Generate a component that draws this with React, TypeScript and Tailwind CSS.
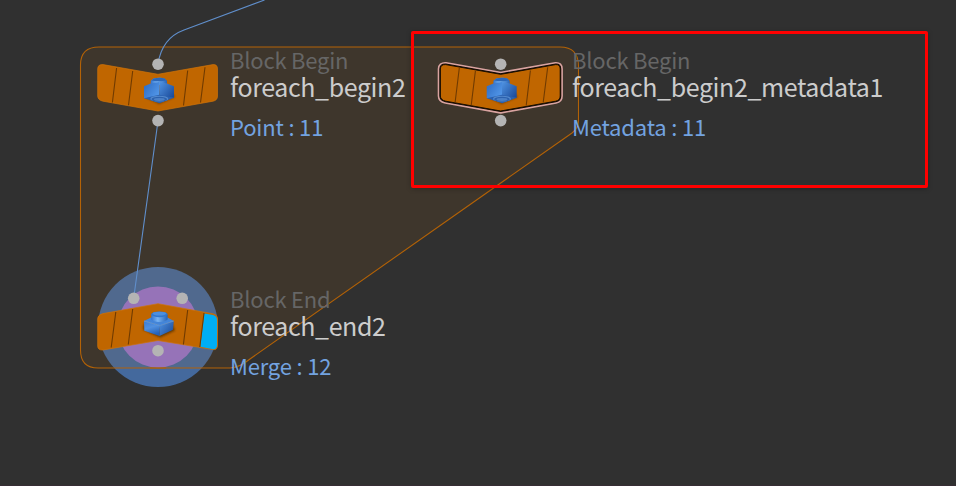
import React from "react";

type LabelProps = { type: string; name: string; info: string; place: string };

function NodeLabel({ type, name, info, place }: LabelProps) {
  return (
    <div
      className={`absolute flex flex-col whitespace-nowrap font-['Noto_Sans_CJK_SC',sans-serif] font-normal ${place}`}
    >
      <span className="h-6 text-[22px] leading-6 tracking-[-0.21px] text-[#666666]">{type}</span>
      <span className="h-[30px] text-[25px] leading-[30px] tracking-[-0.4px] text-[#cccccc]">{name}</span>
      <span className="mt-[13px] h-6 text-[22px] leading-6 tracking-[-0.16px] text-[#73a3e0]">{info}</span>
    </div>
  );
}

function Brick({ x, y, end = false }: { x: number; y: number; end?: boolean }) {
  return end ? (
    <g transform={`translate(${x} ${y})`}>
      <path d="M-15 6L2 14L17 7L14 0H-14Z" fill="#2a1a00" opacity="0.6" filter="url(#soft)" />
      <path d="M-14 -2.5L-7 -6H9.5L15.8 -2.5L2 2Z" fill="#4385d9" />
      <path d="M-14 -2.5L2 2L1.5 12.6L-13.7 7.2Z" fill="url(#endLeft)" />
      <path d="M2 2L15.8 -2.5L15 6.2L1.5 12.6Z" fill="url(#right)" />
      <path d="M-14 -2.5L2 2L15.8 -2.5" fill="none" stroke="#6ba4e6" strokeWidth="0.6" />
      <path d="M-6.8 -9.3V-4C-5 -0.8 7 -0.8 9.6 -4V-9.3Z" fill="url(#stud)" />
      <ellipse cx="1.4" cy="-9.2" rx="8.2" ry="2.9" fill="#3277cd" />
      <ellipse cx="1.4" cy="-9.9" rx="6.8" ry="1.9" fill="#4c8fdf" />
    </g>
  ) : (
    <g transform={`translate(${x} ${y})`}>
      <path d="M-13 6L1 13L17 6L12 0H-10Z" fill="#2a1a00" opacity="0.45" filter="url(#soft)" />
      <path d="M-7.3 -6V-10.2L-4.5 -12.6C-1 -13.6 4 -13.6 6.5 -12.6L9 -10.2V-6Z" fill="url(#stud)" />
      <path d="M-6.5 -10.5L-4.5 -12.6C-1 -13.6 4 -13.6 6.5 -12.6L8.2 -10.5C4 -9.5 -3 -9.5 -6.5 -10.5Z" fill="#2d67b7" />
      <path d="M-14 -4.8L-7.3 -7.4L1.3 -9V6L-14 7.3Z" fill="url(#face)" />
      <path d="M1.3 -9L9 -7.4L16 -4.8V7L1.3 6Z" fill="url(#right)" />
      <path d="M-14 7.2L1.3 3.8L16 6.8L1.5 12.2Z" fill="#2960b0" />
      <ellipse cx="1.3" cy="7.7" rx="9" ry="3" fill="#5389cd" />
      <ellipse cx="1.3" cy="8.2" rx="7.8" ry="2.4" fill="#2c61ae" />
      <ellipse cx="1.3" cy="8.5" rx="5.5" ry="1.4" fill="#4b80c6" />
    </g>
  );
}

const BEGIN_BODY =
  "M103 64.6L158 74.3L213 64.6Q217.5 64.3 217.5 69V96Q217.5 100.3 213 101.2L158 111L103 101.2Q97.7 100 97.7 96V69Q97.7 64.3 103 64.6Z";

function BeginNode({ dx = 0, selected = false }: { dx?: number; selected?: boolean }) {
  return (
    <g transform={`translate(${dx} 0)`}>
      {selected && (
        <>
          <path d={BEGIN_BODY} fill="none" stroke="#d9a3a0" strokeWidth="5.4" strokeLinejoin="round" />
          <path d={BEGIN_BODY} fill="none" stroke="#100a04" strokeWidth="2.2" />
        </>
      )}
      <path
        d={BEGIN_BODY}
        fill="#c06600"
        stroke={selected ? "#180d02" : "#cf7209"}
        strokeWidth={selected ? "1" : "0.7"}
      />
      <path
        d="M116.6 68L112.4 102.5M132.7 71L128.5 105.3M187.7 70.5L183.5 105.5M205 67.3L200.5 102.5"
        stroke="#703b00"
        strokeWidth="1.1"
      />
      <Brick x={158} y={91} />
      <g fill="#b4b4b4">
        <circle cx="158" cy="64.2" r="5.8" />
        <circle cx="158" cy="120.6" r="5.8" />
      </g>
    </g>
  );
}

export default function App() {
  const region =
    "M99 47H560Q578.5 47 578.5 66V121Q578.5 128 572 133L250 359Q239 368 230 368H98Q80.5 368 80.5 350V65Q80.5 47 99 47Z";
  return (
    <main className="relative h-[486px] w-[956px] overflow-hidden bg-[#303030]">
      <svg className="absolute inset-0" width="956" height="486" viewBox="0 0 956 486" fill="none">
        <defs>
          <filter id="soft" x="-30%" y="-50%" width="160%" height="200%">
            <feGaussianBlur stdDeviation="1.2" />
          </filter>
          <linearGradient id="endLeft" x1="0" y1="0" x2="0.3" y2="1">
            <stop stopColor="#3a7cd3" />
            <stop offset="0.5" stopColor="#5090df" />
            <stop offset="1" stopColor="#2461b8" />
          </linearGradient>
          <linearGradient id="face" x1="0" y1="0" x2="1" y2="0.7">
            <stop stopColor="#2d6ac2" />
            <stop offset="1" stopColor="#5196e8" />
          </linearGradient>
          <linearGradient id="right" x1="0" y1="0" x2="1" y2="0.8">
            <stop stopColor="#4f93e3" />
            <stop offset="1" stopColor="#1d4d9c" />
          </linearGradient>
          <linearGradient id="stud">
            <stop stopColor="#3374cf" />
            <stop offset="0.4" stopColor="#77b3f2" />
            <stop offset="1" stopColor="#2864b8" />
          </linearGradient>
        </defs>
        <circle cx="158" cy="327" r="60" fill="#44699d" />
        <path d={region} fill="#be6c08" fillOpacity="0.1" stroke="#b36206" strokeWidth="1.1" />
        <circle cx="158" cy="327" r="40.5" fill="#9673b8" />
        <path d="M150 368H166" stroke="#b36206" strokeWidth="1.1" />
        <path d="M264.5 0L184 30Q162 38 158 64M158 121L133.7 298" stroke="#608fcc" strokeWidth="1.1" />
        <BeginNode />
        <BeginNode dx={342.7} selected />
        <path
          d="M103 313.6L158 303.7L213 313.8Q217.5 315 217.5 319V345Q217.5 350.3 213 349.6L158 340.5L103 350Q97.7 350.3 97.7 346V319Q97.7 315 103 313.6Z"
          fill="#c06600"
          stroke="#cf7209"
          strokeWidth="0.7"
        />
        <path d="M204.3 313.5L213 315Q217 316 217 320V345Q217 350 212 349L200.3 346.8Z" fill="#00aef4" />
        <path
          d="M115.8 312L111.2 347.5M132.7 309L128.3 344.5M187.7 310L183.4 344.5M204 313L199.8 347"
          stroke="#703b00"
          strokeWidth="1.1"
        />
        <Brick x={158} y={323.5} end />
        <g fill="#b4b4b4">
          <circle cx="133.7" cy="298.3" r="5.8" />
          <circle cx="182.2" cy="298.3" r="5.8" />
          <circle cx="158" cy="350.7" r="5.8" />
        </g>
      </svg>
      <NodeLabel type="Block Begin" name="foreach_begin2" info="Point : 11" place="left-[230px] top-[47px]" />
      <NodeLabel
        type="Block Begin"
        name="foreach_begin2_metadata1"
        info="Metadata : 11"
        place="left-[572px] top-[47px]"
      />
      <NodeLabel type="Block End" name="foreach_end2" info="Merge : 12" place="left-[230px] top-[286px]" />
      <div className="absolute left-[411px] top-[31px] h-[157px] w-[517px] rounded-[2px] border-[3px] border-[#ff0000] shadow-[0_1px_5px_rgba(0,0,0,0.25)]" />
      <div className="absolute inset-x-0 bottom-0 h-px bg-[#372d34]" />
    </main>
  );
}
